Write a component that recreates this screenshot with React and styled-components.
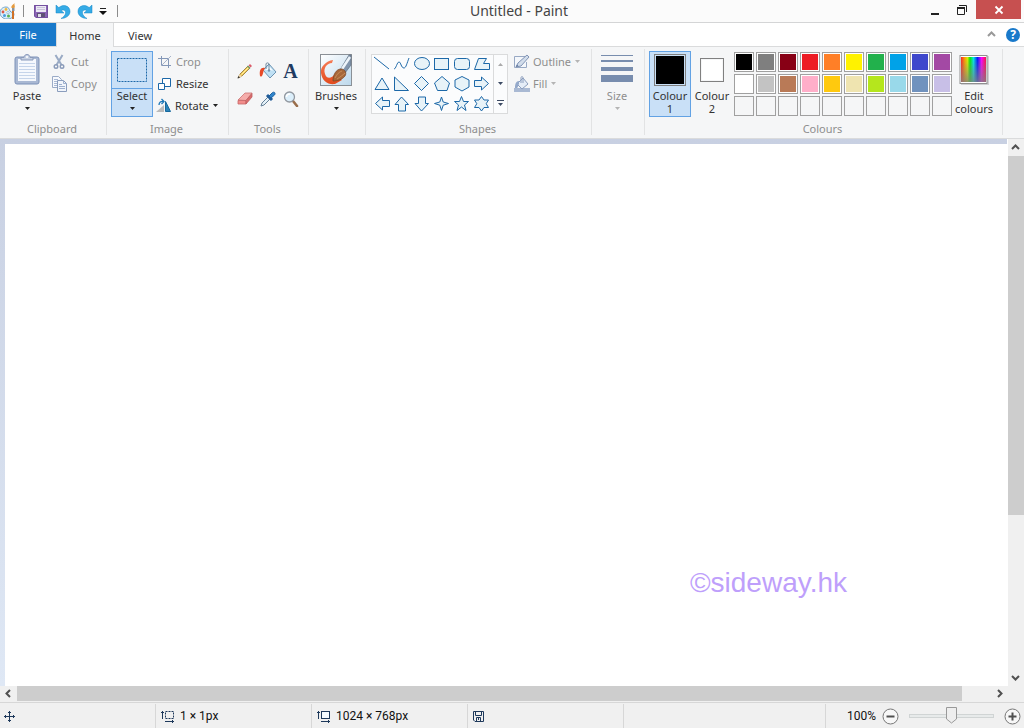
import React from 'react'
import styled, { createGlobalStyle, css } from 'styled-components'

const palette = [
  ['Black', '#000000'], ['Grey', '#7f7f7f'], ['Dark red', '#880015'], ['Red', '#ed1c24'], ['Orange', '#ff7f27'],
  ['Yellow', '#fff200'], ['Green', '#22b14c'], ['Turquoise', '#00a2e8'], ['Indigo', '#3f48cc'], ['Purple', '#a349a4'],
  ['White', '#ffffff'], ['Light grey', '#c3c3c3'], ['Brown', '#b97a57'], ['Rose', '#ffaec9'], ['Gold', '#ffc90e'],
  ['Light yellow', '#efe4b0'], ['Lime', '#b5e61d'], ['Light turquoise', '#99d9ea'], ['Blue-grey', '#7092be'], ['Lavender', '#c8bfe7'],
]

const emptySlots = Array.from({ length: 10 }, (_, i) => i + 1)

const shapes = [
  ['Line', <path d="M2 3L17 15" />],
  ['Curve', <path d="M2 15C4 15 5 8 7 8C9 8 9 14 12 14C14 14 15 9 17 4" />],
  ['Oval', <ellipse cx="10" cy="9.5" rx="7.5" ry="6" />],
  ['Rectangle', <rect x="2.5" y="4.5" width="14" height="11" />],
  ['Rounded rectangle', <rect x="2.5" y="4.5" width="15" height="11" rx="3" />],
  ['Polygon', <path d="M6.5 4.5H14.5L11.5 9.5H17.5V15.5H2.5Z" />],
  ['Triangle', <path d="M10 4L17 15.5H3Z" />],
  ['Right triangle', <path d="M2.5 3V16.5H16.5Z" />],
  ['Diamond', <path d="M9.5 2.5L16.5 9.5L9.5 16.5L2.5 9.5Z" />],
  ['Pentagon', <path d="M10 2.5L17.5 9L15 16.5H5.5L2.5 9Z" />],
  ['Hexagon', <path d="M10 2.5L17 6V13L10 17L3 13V6Z" />],
  ['Right arrow', <path d="M2.5 6.5H9.5V3L16.5 9.5L9.5 16V12.5H2.5Z" />],
  ['Left arrow', <path d="M17.5 6.5H10.5V3L3.5 9.5L10.5 16V12.5H17.5Z" />],
  ['Up arrow', <path d="M6.5 17V10.5H3L9.5 3L16.5 10.5H13.5V17Z" />],
  ['Down arrow', <path d="M6.5 3V9.5H3L9.5 17L16.5 9.5H13.5V3Z" />],
  ['Four-point star', <path d="M9.5 3L11.2 8L16.5 9.5L11.2 11.2L9.5 16.5L7.8 11.2L2.5 9.5L7.8 8Z" />],
  ['Five-point star', <path d="M9.5 2.5L11.5 7.5H16.5L12.5 11L14 16.5L9.5 13L5 16.5L6.5 11L2.5 7.5H7.5Z" />],
  ['Six-point star', <path d="M9.5 2.5L12 6H16.5L14.2 9.7L16.5 13.5H12L9.5 17L7 13.5H2.5L4.8 9.7L2.5 6H7Z" />],
]

const Svg = ({ w = 16, h = w, children }) => (
  <svg width={w} height={h} viewBox={`0 0 ${w} ${h}`} fill="none" aria-hidden="true">{children}</svg>
)

const Caret = () => (
  <Svg w={5} h={3}><path d="M0 0H5L2.5 3Z" fill="currentColor" /></Svg>
)

const AppIcon = () => (
  <Svg>
    <path d="M6 4C2 4 0 7 0 10S3 16 7 16S14 14 14 11C14 9 11 10 10 8S9 4 6 4Z" fill="#dbeefa" stroke="#71a3c6" />
    <circle cx="6" cy="6.5" r="1.4" fill="#f3b73b" />
    <circle cx="3" cy="9" r="1.4" fill="#dd5845" />
    <circle cx="4.5" cy="12.5" r="1.5" fill="#4b9ede" />
    <circle cx="8.5" cy="13" r="1.5" fill="#5bb14c" />
    <circle cx="8" cy="9.7" r="1.2" fill="#fff" stroke="#71a3c6" strokeWidth=".6" />
    <path d="M13 8V16" stroke="#cf7026" strokeWidth="2" />
    <path d="M12 8V5H14.5V8Z" fill="#8894a0" />
    <path d="M11.5 5C11 2 13 2 14.5 0C14 2 15.5 3 14.5 5Z" fill="#e59a3e" />
  </Svg>
)

const SaveIcon = () => (
  <Svg>
    <path d="M1 2H15V15H3L1 13Z" fill="#8a63b5" />
    <path d="M3 2H13V9H3Z" fill="#ece8f4" />
    <path d="M4 4.5H12M4 6.5H12" stroke="#c9c2da" />
    <path d="M4 10H12V15H4Z" fill="#5f5275" />
    <path d="M5 11H8V15H5Z" fill="#dedae8" />
    <path d="M1.5 2.5H14.5V14.5H3L1.5 13Z" stroke="#74509f" />
  </Svg>
)

const UndoIcon = () => (
  <Svg>
    <path d="M1 2V10H9L6.2 7.5C8.5 6.2 11 7.5 10.5 10.2C10.2 12.300 8.5 14 6 15.5C11 15.5 15 12.5 15 8.5C15 2.5 8 .8 3.8 4.6Z" fill="#35abe6" stroke="#1686c7" strokeWidth=".5" />
  </Svg>
)

const RedoIcon = () => (
  <Svg>
    <path d="M15 2V10H7L9.8 7.5C7.500 6.2 5 7.5 5.5 10.2C5.8 12.300 7.5 14 10 15.5C5 15.5 1 12.5 1 8.5C1 2.5 8 .8 12.2 4.6Z" fill="#35abe6" stroke="#1686c7" strokeWidth=".5" />
  </Svg>
)

const CustomiseIcon = () => (
  <Svg w={8} h={8}><path d="M1 1.5H7" stroke="#222" /><path d="M0 4H8L4 8Z" fill="#111" /></Svg>
)

const PasteIcon = () => (
  <Svg w={26} h={32}>
    <rect x="1" y="3" width="24" height="27" rx="2" fill="#a9b8d3" stroke="#7d92b8" />
    <path d="M4 5H22V27H4Z" fill="#f5f8fd" />
    <path d="M5 9.5H21M5 12.5H21M5 15.5H21M5 18.5H21M5 21.5H21M5 24.5H21" stroke="#c5d4ea" />
    <path d="M7 6V3.5H10C10-.5 16-.5 16 3.5H19V6Z" fill="#c5d0e2" stroke="#8a9abb" />
    <circle cx="13" cy="3" r="1" fill="#fff" />
  </Svg>
)

const CutIcon = () => (
  <Svg>
    <path d="M3.5 1L9.5 11M10.5 1L4.5 11" stroke="#9aabc5" strokeWidth="2" />
    <circle cx="4" cy="12.5" r="1.8" stroke="#8a9bb9" strokeWidth="1.4" />
    <circle cx="10" cy="12.5" r="1.8" stroke="#8a9bb9" strokeWidth="1.4" />
  </Svg>
)

const CopyIcon = () => (
  <Svg>
    <path d="M.5 .5H6.5L9.5 3.5V11.5H.5Z" fill="#f7f9fd" stroke="#9aabc7" />
    <path d="M2 3.5H6M2 5.5H7M2 7.5H5M2 9.5H5" stroke="#a9b9d4" />
    <path d="M5.5 4.5H11.5L14.5 7.5V15.5H5.5Z" fill="#f1f5fb" stroke="#8a9dbd" />
    <path d="M11.5 4.5V7.5H14.5M7 8.5H10M7 10.5H13M7 12.5H13" stroke="#9db0cf" />
  </Svg>
)

const SelectIcon = () => (
  <Svg w={32} h={32}><rect x="1.500" y="4.500" width="29" height="23" stroke="#1c68a8" strokeDasharray="2 1" /></Svg>
)

const CropIcon = () => (
  <Svg>
    <path d="M4.5 2V11.5H14M1 4.5H11.5V14" stroke="#8498b8" />
    <path d="M4 12L14 2" stroke="#a6b3c9" />
  </Svg>
)

const ResizeIcon = () => (
  <Svg>
    <path d="M5.5 2.5H13.5V10.5H5.5Z" fill="#fff" stroke="#1c68a8" />
    <path d="M1.5 7.5H7.5V13.5H1.5Z" fill="#fff" stroke="#1c68a8" />
  </Svg>
)

const RotateIcon = () => (
  <Svg>
    <path d="M0 14H8V7Z" fill="#bababa" />
    <path d="M9.5 13.5V3.5L14.5 13.5Z" fill="#2a82b8" stroke="#15689d" />
    <path d="M3 7C3 4 5 3 7.5 3.5M5.5 1L8 3.500L5.5 6" stroke="#1a75b7" strokeWidth="1.3" />
  </Svg>
)

const PencilIcon = () => (
  <Svg>
    <path d="M1 15L3 11L11 3L13 5L5 13Z" fill="#f2ca56" stroke="#8b7439" strokeWidth=".8" />
    <path d="M4.5 11.5L12 4" stroke="#fff0a3" />
    <path d="M11.5 2.5L13 1L15 3L13.5 4.5Z" fill="#db5c6b" />
    <path d="M10.5 3L13 5.5" stroke="#6f9d6d" strokeWidth="1.2" />
    <path d="M1 15L2.5 11L5 13.5Z" fill="#efd6ac" />
    <path d="M.5 15.5L1.5 13L3 14.5Z" fill="#333" />
  </Svg>
)

const BucketIcon = () => (
  <Svg w={18} h={18}>
    <path d="M4 8L10 2L17 10L11 16Z" fill="#bfe0f4" stroke="#6c93b2" />
    <path d="M6 8L10 4L14 8.5Z" fill="#f5fbff" />
    <path d="M7 7V2C7 .5 10 .5 10 2V8" stroke="#71899d" />
    <circle cx="10" cy="8.5" r="1.2" fill="#7093ae" />
    <path d="M6 6C2 5 0 8 1 14C3 16 4 12 4.5 9Z" fill="#e84a27" />
  </Svg>
)

const TextToolIcon = () => <LetterIcon aria-hidden="true">A</LetterIcon>

const EraserIcon = () => (
  <Svg>
    <path d="M1 9L8 2H15L9 9.5Z" fill="#f5adab" stroke="#cd7473" strokeWidth=".8" />
    <path d="M1 9.5H9V13H1Z" fill="#f28d8b" stroke="#c76768" strokeWidth=".8" />
    <path d="M9 9.5L15 2.5V6L9 13Z" fill="#d96c6c" stroke="#bf5e60" strokeWidth=".8" />
  </Svg>
)

const PickerIcon = () => (
  <Svg>
    <path d="M1 15L2 12L8 6L10 8L4 14Z" fill="#e4f0f7" stroke="#648097" />
    <path d="M7 4L12 9" stroke="#215c98" strokeWidth="3" />
    <path d="M9 5L12 2C14 0 16 2 14.5 4L11 7Z" fill="#3085cc" stroke="#1c62a3" />
  </Svg>
)

const MagnifierIcon = () => (
  <Svg>
    <path d="M10 10L14 15" stroke="#9a6e4b" strokeWidth="2.6" strokeLinecap="round" />
    <circle cx="6.5" cy="6" r="5" fill="#dceffb" stroke="#9298a0" strokeWidth="1.3" />
    <path d="M3.5 6C3.5 4 5 3 7 3" stroke="#fff" strokeWidth="1.5" />
  </Svg>
)

const BrushIcon = () => (
  <Svg w={32} h={32}>
    <defs>
      <linearGradient id="brush-sky" x2="1" y2="1"><stop stopColor="#fff" /><stop offset="1" stopColor="#bcd8ec" /></linearGradient>
      <linearGradient id="brush-paint" x2="0" y2="1"><stop stopColor="#f67b55" /><stop offset="1" stopColor="#e24b1e" /></linearGradient>
    </defs>
    <rect x=".5" y=".5" width="31" height="31" fill="url(#brush-sky)" stroke="#8a9096" />
    <path d="M13 6C6 7 0 13 1 19C2 27 8 31 15 30L22 26L15 20C12 24 7 26 5 20C3 14 7 9 12 9Z" fill="url(#brush-paint)" />
    <path d="M20 16L29 1H31V11L25 19Z" fill="#8195ac" stroke="#5f6e80" strokeWidth=".7" />
    <path d="M22 15L30 3" stroke="#edf4fa" strokeWidth="2.5" />
    <path d="M13 27C13 21 16 15 21 15C25 15 27 19 25 22C22 26 17 27 13 27Z" fill="#a7683a" stroke="#754221" strokeWidth=".7" />
    <path d="M15 24C17 20 19 18 22 17M17 25C20 23 23 21 25 19" stroke="#d29b66" strokeWidth=".7" />
  </Svg>
)

const OutlineIcon = () => (
  <Svg>
    <path d="M11 2.5H.5V13.5H12.5V8" fill="#f4f7fb" stroke="#98a9c4" />
    <path d="M2 13L4 9L13 1L15 3L7 12Z" fill="#d2ddeb" stroke="#8194b5" />
    <path d="M2 13L3 10.5L4.5 12Z" fill="#62799f" />
  </Svg>
)

const FillIcon = () => (
  <Svg>
    <path d="M0 12H16V16H0Z" fill="#a9b9d3" />
    <path d="M3 8L9 2L14 8L8 13Z" fill="#e5edf7" stroke="#8a9dbd" />
    <path d="M7 7V2C7 0 9 0 9 2V7" stroke="#8a9dbd" />
    <path d="M5 5C2 5 1 8 1 12H3C4 12 4 9 5 8Z" fill="#94a9ca" />
  </Svg>
)

const SizeIcon = () => (
  <Svg w={32} h={32}>
    <path d="M0 1H32V2H0ZM0 6H32V8H0ZM0 13H32V17H0ZM0 21H32V28H0Z" fill="#788dae" />
  </Svg>
)

const SpectrumIcon = () => (
  <Svg w={30} h={32}>
    <defs>
      <linearGradient id="hues">
        <stop stopColor="#f22" /><stop offset=".15" stopColor="#ffa000" /><stop offset=".26" stopColor="#d8f000" />
        <stop offset=".36" stopColor="#0e0" /><stop offset=".5" stopColor="#00e8e8" /><stop offset=".66" stopColor="#0018ff" />
        <stop offset=".82" stopColor="#f0f" /><stop offset="1" stopColor="#ff1040" />
      </linearGradient>
      <linearGradient id="fade" x2="0" y2="1"><stop stopColor="#808080" stopOpacity="0" /><stop offset="1" stopColor="#808080" stopOpacity=".8" /></linearGradient>
    </defs>
    <path d="M2 2H30V31H2Z" fill="#cfcfd2" />
    <rect x="1" y="1.5" width="27" height="28" fill="#fff" stroke="#8f8f8f" />
    <path d="M2 3H27V28H2Z" fill="url(#hues)" />
    <path d="M2 3H27V28H2Z" fill="url(#fade)" />
  </Svg>
)

const chevrons = { up: 'M1 6L4.5 2.5L8 6', down: 'M1 3L4.5 6.5L8 3', left: 'M6 1L2.5 4.5L6 8', right: 'M3 1L6.5 4.5L3 8' }

const Chevron = ({ to }) => (
  <Svg w={9}><path d={chevrons[to]} stroke="currentColor" strokeWidth="2" /></Svg>
)

const MoveIcon = () => (
  <Svg w={11}><path d="M0 5.5H11M5.5 0V11M4 1.5H7M4 9.5H7M1.5 4V7M9.5 4V7" stroke="#1e395b" /></Svg>
)

const ExtentIcon = ({ dashed }) => (
  <Svg w={14} h={13}>
    <path d="M1.5 1V9M0 2.5H3M4 11.5H13M11.5 10V13" stroke="#1e395b" />
    <rect x="4.5" y="1.5" width="8" height="7" fill={dashed ? 'none' : '#f5fbff'} stroke="#1e395b" strokeDasharray={dashed ? '2 1' : undefined} />
  </Svg>
)

const DiskIcon = () => (
  <Svg w={11}><path d="M.5 .5H10.5V10.5H2L.5 9ZM2.5 .5V4.5H8.5V.5M3.5 10V6.5H7.5V10M5.5 7V9" stroke="#1e395b" /></Svg>
)

const ZoomIcon = ({ plus }) => (
  <Svg w={17}>
    <circle cx="8.5" cy="8.5" r="7.5" fill="#f7f7f7" stroke="#777" />
    <path d={plus ? 'M4.5 8.5H12.5M8.5 4.5V12.5' : 'M4.5 8.5H12.5'} stroke="#505050" strokeWidth="2" />
  </Svg>
)

export default function App() {
  return (
    <Window>
      <GlobalStyle />

      <TitleBar>
        <QuickAccess>
          <AppIcon />
          <Divider />
          <QuickButton aria-label="Save"><SaveIcon /></QuickButton>
          <QuickButton aria-label="Undo"><UndoIcon /></QuickButton>
          <QuickButton aria-label="Redo"><RedoIcon /></QuickButton>
          <CustomiseButton aria-label="Customise toolbar"><CustomiseIcon /></CustomiseButton>
          <Divider />
        </QuickAccess>
        <Title>Untitled - Paint</Title>
        <WindowControls>
          <WindowButton aria-label="Minimise">
            <Svg w={12}><path d="M3 10H11" stroke="#222" strokeWidth="2" /></Svg>
          </WindowButton>
          <WindowButton aria-label="Restore">
            <Svg w={12}><path d="M1.5 4.5H8.5V10.5H1.5ZM3 1.5H10.5V8" stroke="#222" /><path d="M1 4H9" stroke="#222" strokeWidth="2" /></Svg>
          </WindowButton>
          <CloseButton aria-label="Close">
            <Svg w={10}><path d="M1.5 1.5L8.5 8.5M8.5 1.5L1.5 8.5" stroke="#fff" strokeWidth="1.8" /></Svg>
          </CloseButton>
        </WindowControls>
      </TitleBar>

      <TabBar>
        <FileTab>File</FileTab>
        <Tab $active>Home</Tab>
        <Tab>View</Tab>
        <TabTools>
          <IconButton aria-label="Minimise the ribbon">
            <Svg w={9}><path d="M1 6L4.5 2.5L8 6" stroke="#999" strokeWidth="2" /></Svg>
          </IconButton>
          <HelpButton aria-label="Help">?</HelpButton>
        </TabTools>
      </TabBar>

      <Ribbon>
        <Group $width={107}>
          <GroupBody $inset>
            <BigButton><BigIcon><PasteIcon /></BigIcon><span>Paste</span><CaretLine><Caret /></CaretLine></BigButton>
            <Stack $gap={3}>
              <SmallButton disabled><CutIcon />Cut</SmallButton>
              <SmallButton disabled><CopyIcon />Copy</SmallButton>
            </Stack>
          </GroupBody>
          <GroupLabel>Clipboard</GroupLabel>
        </Group>

        <Group $width={122}>
          <GroupBody>
            <SplitButton>
              <SplitTop aria-label="Select area"><SelectIcon /></SplitTop>
              <SplitBottom><span>Select</span><CaretLine><Caret /></CaretLine></SplitBottom>
            </SplitButton>
            <Stack $gap={3}>
              <SmallButton disabled><CropIcon />Crop</SmallButton>
              <SmallButton><ResizeIcon />Resize</SmallButton>
              <SmallButton><RotateIcon />Rotate <Caret /></SmallButton>
            </Stack>
          </GroupBody>
          <GroupLabel>Image</GroupLabel>
        </Group>

        <Group $width={80}>
          <GroupBody>
            <ToolGrid>
              <IconButton aria-label="Pencil"><PencilIcon /></IconButton>
              <IconButton aria-label="Fill with colour"><BucketIcon /></IconButton>
              <IconButton aria-label="Text"><TextToolIcon /></IconButton>
              <IconButton aria-label="Eraser"><EraserIcon /></IconButton>
              <IconButton aria-label="Colour picker"><PickerIcon /></IconButton>
              <IconButton aria-label="Magnifier"><MagnifierIcon /></IconButton>
            </ToolGrid>
          </GroupBody>
          <GroupLabel>Tools</GroupLabel>
        </Group>

        <Group $width={57}>
          <GroupBody>
            <BigButton $wide><BigIcon><BrushIcon /></BigIcon><span>Brushes</span><CaretLine><Caret /></CaretLine></BigButton>
          </GroupBody>
        </Group>

        <Group $width={226}>
          <GroupBody>
            <Gallery>
              <ShapeGrid>
                {shapes.map(([name, shape]) => (
                  <ShapeButton key={name} aria-label={name}><Svg w={20}>{shape}</Svg></ShapeButton>
                ))}
              </ShapeGrid>
              <GalleryScroll>
                <IconButton aria-label="Previous shapes" disabled><Svg w={5} h={3}><path d="M0 3H5L2.5 0Z" fill="#aaa" /></Svg></IconButton>
                <IconButton aria-label="Next shapes"><Caret /></IconButton>
                <IconButton aria-label="More shapes"><Svg w={7} h={7}><path d="M0 .5H7" stroke="currentColor" /><path d="M1 3H6L3.5 6Z" fill="currentColor" /></Svg></IconButton>
              </GalleryScroll>
            </Gallery>
            <Stack $gap={6}>
              <SmallButton disabled><OutlineIcon />Outline <Caret /></SmallButton>
              <SmallButton disabled><FillIcon />Fill <Caret /></SmallButton>
            </Stack>
          </GroupBody>
          <GroupLabel>Shapes</GroupLabel>
        </Group>

        <Group $width={53}>
          <GroupBody>
            <BigButton disabled><BigIcon><SizeIcon /></BigIcon><span>Size</span><CaretLine><Caret /></CaretLine></BigButton>
          </GroupBody>
        </Group>

        <Group $width={358}>
          <GroupBody>
            <BigButton $active><BigIcon><Swatch $large $color="#000" /></BigIcon><span>Colour</span><span>1</span></BigButton>
            <BigButton><BigIcon><Swatch $color="#fff" /></BigIcon><span>Colour</span><span>2</span></BigButton>
            <Palette>
              {palette.map(([name, color]) => <PaletteCell key={name} aria-label={name} $color={color} />)}
              {emptySlots.map(slot => <PaletteCell key={slot} aria-label={`Custom colour ${slot}`} />)}
            </Palette>
            <BigButton><BigIcon><SpectrumIcon /></BigIcon><span>Edit</span><span>colours</span></BigButton>
          </GroupBody>
          <GroupLabel>Colours</GroupLabel>
        </Group>
      </Ribbon>

      <Workspace>
        <Backdrop>
          <Canvas>
            <Watermark>©sideway.hk</Watermark>
          </Canvas>
        </Backdrop>
        <VerticalScroll>
          <ScrollButton aria-label="Scroll up"><Chevron to="up" /></ScrollButton>
          <Track><Thumb $size={70} $vertical /></Track>
          <ScrollButton aria-label="Scroll down"><Chevron to="down" /></ScrollButton>
        </VerticalScroll>
      </Workspace>
      <HorizontalScroll>
        <ScrollButton aria-label="Scroll left"><Chevron to="left" /></ScrollButton>
        <Track><Thumb $size={97} /></Track>
        <ScrollButton aria-label="Scroll right"><Chevron to="right" /></ScrollButton>
      </HorizontalScroll>

      <StatusBar>
        <StatusCell $first><MoveIcon /></StatusCell>
        <StatusCell><ExtentIcon dashed />1 × 1px</StatusCell>
        <StatusCell><ExtentIcon />1024 × 768px</StatusCell>
        <StatusCell><DiskIcon /></StatusCell>
        <StatusSpacer />
        <ZoomBar>
          <ZoomLabel htmlFor="zoom">100%</ZoomLabel>
          <IconButton aria-label="Zoom out"><ZoomIcon /></IconButton>
          <ZoomSlider id="zoom" type="range" min="0" max="100" defaultValue="50" />
          <IconButton aria-label="Zoom in"><ZoomIcon plus /></IconButton>
        </ZoomBar>
      </StatusBar>
    </Window>
  )
}


const GlobalStyle = createGlobalStyle`
  * {
    box-sizing: border-box;
  }

  body {
    margin: 0;
    overflow: hidden;
    font-family: "Noto Sans", "Open Sans", sans-serif;
    font-size: 11px;
    color: #333;
  }

  svg {
    display: block;
    flex: none;
  }

  button {
    padding: 0;
    border: 0;
    background: none;
    font: inherit;
    color: inherit;
  }
`

const Window = styled.div`
  display: flex;
  flex-direction: column;
  height: 100vh;
  background: #f0f0f0;
`

const TitleBar = styled.header`
  display: flex;
  flex: none;
  height: 23px;
  background: #fbfbfb;
  border-bottom: 1px solid #d4d5d6;
`

const QuickAccess = styled.div`
  display: flex;
  align-items: center;
  gap: 7px;
  width: 118px;
`

const Divider = styled.span`
  width: 1px;
  height: 12px;
  background: #8c8c8c;
`

const QuickButton = styled.button`
  display: flex;
  width: 15px;
  justify-content: center;

  &:first-of-type {
    margin-left: 2px;
  }
`

const CustomiseButton = styled(QuickButton)`
  width: 8px;
  margin-right: 3px;
`

const Title = styled.h1`
  flex: 1;
  margin: 0;
  text-align: center;
  font-size: 14px;
  font-weight: 400;
  line-height: 22px;
  color: #444;
`

const WindowControls = styled.div`
  display: flex;
  align-items: flex-start;
  width: 104px;
  padding-right: 3px;
`

const WindowButton = styled.button`
  display: flex;
  flex: 1;
  align-items: center;
  justify-content: center;
  height: 19px;
`

const CloseButton = styled(WindowButton)`
  flex: none;
  width: 45px;
  background: #c75050;
`

const TabBar = styled.nav`
  display: flex;
  flex: none;
  height: 24px;
  background: #fff;
  border-bottom: 1px solid #dadbdc;
`

const Tab = styled.button`
  flex: none;
  height: 23px;
  padding: 1px 14px 0;
  border: 0 solid #dadbdc;
  line-height: 24px;

  ${({ $active }) => $active && css`
    width: 58px;
    height: 24px;
    padding: 1px 0 0;
    border-width: 0 1px;
    background: #f5f6f7;
  `}
`

const FileTab = styled(Tab)`
  width: 56px;
  padding: 0;
  background: #1979ca;
  color: #fff;
`

const TabTools = styled.div`
  display: flex;
  align-items: center;
  gap: 10px;
  margin-left: auto;
  padding-right: 4px;
`

const HelpButton = styled.button`
  width: 14px;
  height: 14px;
  border-radius: 50%;
  background: #1979ca;
  color: #fff;
  font-size: 12px;
  font-weight: 700;
  line-height: 14px;
`

const Ribbon = styled.div`
  display: flex;
  flex: none;
  padding: 2px 0 3px;
  background: #f5f6f7;
  border-bottom: 1px solid #dadbdc;
`

const Group = styled.section`
  flex: none;
  width: ${({ $width }) => $width}px;
  height: 86px;
  padding: 2px 4px 0;
  border-right: 1px solid #e2e3e4;
`

const GroupBody = styled.div`
  display: flex;
  height: 66px;
  padding-left: ${({ $inset }) => ($inset ? 2 : 0)}px;
`

const GroupLabel = styled.div`
  margin-top: 6px;
  padding-right: 2px;
  text-align: center;
  line-height: 12px;
  color: #8e8e8e;
`

const BigButton = styled.button`
  display: flex;
  flex: none;
  flex-direction: column;
  align-items: center;
  width: ${({ $wide }) => ($wide ? 46 : 42)}px;
  height: 66px;
  padding-top: 2px;
  border: 1px solid ${({ $active }) => ($active ? '#62a2e4' : 'transparent')};
  background: ${({ $active }) => ($active ? '#c9e0f7' : 'none')};
  line-height: 13px;
  white-space: nowrap;

  &:disabled {
    color: #8e8e8e;
  }
`

const BigIcon = styled.span`
  display: flex;
  align-items: center;
  justify-content: center;
  width: 32px;
  height: 32px;
  margin-bottom: 3px;
`

const CaretLine = styled.span`
  display: flex;
  align-items: center;
  justify-content: center;
  height: 13px;
  color: #222;

  ${BigButton}:disabled & {
    color: #b4b4b4;
  }
`

const SplitButton = styled.div`
  display: flex;
  flex: none;
  flex-direction: column;
  width: 42px;
  border: 1px solid #62a2e4;
  background: #c9e0f7;
`

const SplitTop = styled.button`
  display: flex;
  justify-content: center;
  height: 36px;
  padding-top: 2px;
`

const SplitBottom = styled.button`
  display: flex;
  flex: 1;
  flex-direction: column;
  align-items: center;
  border-top: 1px solid #62a2e4;
  line-height: 13px;
`

const Stack = styled.div`
  display: flex;
  flex-direction: column;
  margin-left: ${({ $gap }) => $gap}px;
`

const SmallButton = styled.button`
  display: flex;
  align-items: center;
  gap: 3px;
  height: 22px;
  padding-bottom: 2px;

  &:disabled {
    color: #8e8e8e;
  }

  svg:first-child {
    margin-top: 2px;
  }

  svg:last-child {
    margin-left: 1px;
    color: #222;
  }

  &:disabled svg:last-child {
    color: #b4b4b4;
  }
`

const IconButton = styled.button`
  display: flex;
  align-items: center;
  justify-content: center;
`

const ToolGrid = styled.div`
  display: grid;
  grid-template-columns: repeat(3, 23px);
  grid-auto-rows: 28px;
  padding-top: 6px;
`

const LetterIcon = styled.span`
  font-family: "Liberation Serif", serif;
  font-size: 20px;
  font-weight: 700;
  line-height: 20px;
  color: #1f3b62;
`

const Gallery = styled.div`
  display: flex;
  width: 137px;
  height: 60px;
  margin: 3px 0 0 1px;
  border: 1px solid #dadbdc;
  background: #fbfcfd;
`

const ShapeGrid = styled.div`
  display: grid;
  flex: 1;
  grid-template-columns: repeat(6, 20px);
  grid-template-rows: repeat(3, 20px);
  align-content: center;
`

const ShapeButton = styled.button`
  stroke: #1c68a8;

  path, ellipse, rect {
    fill: #e8f3f8;
  }

  &:nth-child(-n + 2) path {
    fill: none;
  }
`

const GalleryScroll = styled.div`
  display: grid;
  grid-template-rows: repeat(3, 1fr);
  width: 14px;
  border-left: 1px solid #dadbdc;
  color: #3c4a63;
`

const Swatch = styled.span`
  width: ${({ $large }) => ($large ? 32 : 24)}px;
  height: ${({ $large }) => ($large ? 32 : 24)}px;
  padding: 1px;
  border: 1px solid #808080;
  background: ${({ $color }) => $color} content-box;
`

const Palette = styled.div`
  display: grid;
  grid-template-columns: repeat(10, 20px);
  grid-auto-rows: 20px;
  gap: 2px;
  padding: 1px 1px 0;
`

const PaletteCell = styled.button`
  && {
    padding: 1px;
    border: 1px solid #a0a0a0;
    background: ${({ $color }) => ($color ? `linear-gradient(${$color}, ${$color}) content-box, #fff` : 'none')};
  }
`

const Workspace = styled.main`
  display: flex;
  flex: 1;
  min-height: 0;
`

const Backdrop = styled.div`
  display: flex;
  flex: 1;
  padding: 5px 0 0 5px;
  border-right: 1px solid #fff;
  background: linear-gradient(#c8d0e2, #dfe8f5);
`

const Canvas = styled.div`
  position: relative;
  flex: 1;
  background: #fff;
`

const Watermark = styled.span`
  position: absolute;
  right: 160px;
  bottom: 87px;
  font-family: "Liberation Sans", Arial, sans-serif;
  font-size: 28px;
  line-height: 32px;
  color: #be9ffb;
`

const VerticalScroll = styled.div`
  display: flex;
  flex-direction: column;
  width: 16px;
`

const HorizontalScroll = styled.div`
  display: flex;
  flex: none;
  height: 16px;
  padding-right: 16px;
`

const ScrollButton = styled.button`
  display: flex;
  flex: none;
  align-items: center;
  justify-content: center;
  width: 17px;
  height: 17px;
  color: #505050;

  ${VerticalScroll} & {
    width: 15px;
  }

  ${HorizontalScroll} & {
    height: 15px;
  }
`

const Track = styled.div`
  flex: 1;
`

const Thumb = styled.div`
  width: ${({ $size, $vertical }) => ($vertical ? '100%' : `${$size}%`)};
  height: ${({ $size, $vertical }) => ($vertical ? `${$size}%` : '15px')};
  background: #cdcdcd;
`

const StatusBar = styled.footer`
  display: flex;
  flex: none;
  height: 26px;
  border-top: 1px solid #d7d7d7;
  font-family: Roboto, sans-serif;
  font-size: 12px;
  color: #111;
`

const StatusCell = styled.div`
  display: flex;
  align-items: center;
  gap: 5px;
  width: 156px;
  margin-top: 1px;
  padding-left: ${({ $first }) => ($first ? 4 : 5)}px;
  border-right: 1px solid #d7d7d7;
`

const StatusSpacer = styled.div`
  flex: 1;
`

const ZoomBar = styled.div`
  display: flex;
  align-items: center;
  gap: 6px;
  width: 199px;
  margin-top: 1px;
  padding: 0 3px 0 21px;
  border-left: 1px solid #d7d7d7;
`

const ZoomLabel = styled.label`
  flex: none;
`

const ZoomSlider = styled.input`
  flex: 1;
  min-width: 0;
  height: 18px;
  margin: 0 4px;
  appearance: none;
  background: none;

  &::-webkit-slider-runnable-track {
    height: 4px;
    border: 1px solid #d0d4d4;
    background: #e7eaea;
  }

  &::-webkit-slider-thumb {
    appearance: none;
    width: 11px;
    height: 17px;
    margin-top: -8px;
    background: url("data:image/svg+xml,%3Csvg xmlns='http://www.w3.org/2000/svg' width='11' height='17'%3E%3Cpath d='M.5 .5H10.5V12L5.5 16L.5 12Z' fill='%23eeeeee' stroke='%23999999'/%3E%3C/svg%3E") no-repeat;
  }
`
